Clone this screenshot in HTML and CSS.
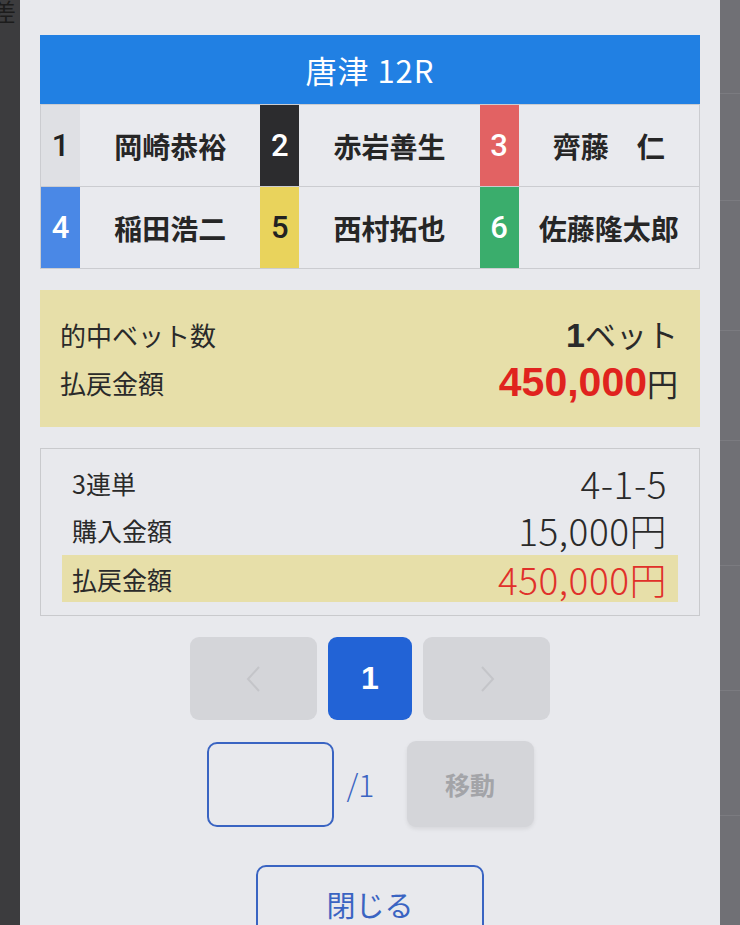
FILE: index.html
```html
<!DOCTYPE html>
<html lang="ja">
<head>
<meta charset="utf-8">
<title>唐津 12R</title>
<link rel="stylesheet" href="styles.css">
</head>
<body>
<div class="screen">
  <div class="side side-left">
    <span class="behind-text">差し</span>
  </div>
  <main class="modal">
    <div class="race-title">唐津 12R</div>
    <div class="players">
      <div class="player"><span class="num n1">1</span><span class="name">岡崎恭裕</span></div>
      <div class="player"><span class="num n2">2</span><span class="name">赤岩善生</span></div>
      <div class="player"><span class="num n3">3</span><span class="name">齊藤　仁</span></div>
      <div class="player"><span class="num n4">4</span><span class="name">稲田浩二</span></div>
      <div class="player"><span class="num n5">5</span><span class="name">西村拓也</span></div>
      <div class="player"><span class="num n6">6</span><span class="name">佐藤隆太郎</span></div>
    </div>

    <section class="summary">
      <div class="sum-row">
        <span class="sum-label">的中ベット数</span>
        <span class="sum-value"><b class="bet-num">1</b>ベット</span>
      </div>
      <div class="sum-row">
        <span class="sum-label">払戻金額</span>
        <span class="sum-value"><b class="pay-num">450,000</b>円</span>
      </div>
    </section>

    <section class="detail">
      <div class="det-row">
        <span class="det-label">3連単</span>
        <span class="det-value">4-1-5</span>
      </div>
      <div class="det-row">
        <span class="det-label">購入金額</span>
        <span class="det-value">15,000円</span>
      </div>
      <div class="det-row det-hit">
        <span class="det-label">払戻金額</span>
        <span class="det-value red">450,000円</span>
      </div>
    </section>

    <nav class="pager">
      <button class="pg pg-arrow" aria-label="前へ">
        <svg width="22" height="30" viewBox="0 0 22 30"><path d="M16 3 L5 15 L16 27" fill="none" stroke="#c4c5c9" stroke-width="2"/></svg>
      </button>
      <button class="pg pg-current">1</button>
      <button class="pg pg-arrow" aria-label="次へ">
        <svg width="22" height="30" viewBox="0 0 22 30"><path d="M6 3 L17 15 L6 27" fill="none" stroke="#c4c5c9" stroke-width="2"/></svg>
      </button>
    </nav>

    <div class="jump">
      <input class="jump-input" type="text" aria-label="ページ">
      <span class="jump-total">/1</span>
      <button class="jump-btn">移動</button>
    </div>

    <div class="close-wrap">
      <button class="close-btn">閉じる</button>
    </div>
  </main>
  <div class="side side-right"></div>
</div>
</body>
</html>
```

FILE: styles.css
```css
* { box-sizing: border-box; }

html, body {
  margin: 0;
  padding: 0;
  height: 925px;
  overflow: hidden;
  font-family: "Noto Sans CJK JP", "Noto Sans", "Liberation Sans", sans-serif;
  color: #222;
}

.screen {
  display: flex;
  width: 740px;
  height: 925px;
}

.side {
  width: 20px;
  flex: none;
  height: 925px;
}

.side-left {
  background: #3c3c3e;
  overflow: hidden;
}

.behind-text {
  display: block;
  margin-left: -8px;
  margin-top: -4px;
  font-size: 24px;
  line-height: 30px;
  color: #1c1c1c;
  white-space: nowrap;
}

.side-right {
  background-color: #707075;
  background-image:
    linear-gradient(#7b7b80, #7b7b80),
    linear-gradient(#7b7b80, #7b7b80),
    linear-gradient(#7b7b80, #7b7b80),
    linear-gradient(#7b7b80, #7b7b80),
    linear-gradient(#7b7b80, #7b7b80),
    linear-gradient(#7b7b80, #7b7b80),
    linear-gradient(#7b7b80, #7b7b80);
  background-size: 100% 1px;
  background-repeat: no-repeat;
  background-position: 0 93px, 0 200px, 0 330px, 0 440px, 0 565px, 0 690px, 0 815px;
}

.modal {
  width: 700px;
  flex: none;
  height: 925px;
  background: #e8e9ed;
  padding: 35px 20px 0;
  overflow: hidden;
}

.race-title {
  height: 69px;
  background: #2180e3;
  color: #fff;
  font-size: 31px;
  display: flex;
  align-items: center;
  justify-content: center;
  letter-spacing: 1px;
}

.players {
  display: grid;
  grid-template-columns: repeat(3, 1fr);
  grid-auto-rows: 82px;
  border: 1px solid #cbccd0;
  border-top: none;
  background: #e9eaee;
}

.player {
  display: flex;
  border-top: 1px solid #cbccd0;
}

.num {
  width: 39px;
  flex: none;
  display: flex;
  align-items: center;
  justify-content: center;
  font-size: 31px;
  font-family: Roboto, "Liberation Sans", sans-serif;
  font-weight: 500;
}

.n1 { background: #dfe0e4; color: #222; }
.n2 { background: #2c2c2e; color: #fff; }
.n3 { background: #e26263; color: #fff; }
.n4 { background: #4a88e6; color: #fff; }
.n5 { background: #e9d35c; color: #222; }
.n6 { background: #3aad6c; color: #fff; }

.name {
  flex: 1;
  display: flex;
  align-items: center;
  justify-content: center;
  font-size: 28px;
  font-weight: 700;
  color: #262626;
  white-space: nowrap;
}

.summary {
  margin-top: 21px;
  height: 137px;
  background: #e7dfa9;
  padding: 20px 22px 0 20px;
}

.sum-row {
  display: flex;
  justify-content: space-between;
  align-items: center;
  height: 48px;
}

.sum-label {
  font-size: 26px;
  color: #2a2a2a;
}

.sum-value {
  font-size: 31px;
  line-height: 44px;
  color: #2a2a2a;
}

.bet-num {
  font-size: 34px;
  font-weight: 700;
  font-family: "Liberation Sans", sans-serif;
}

.pay-num {
  font-size: 41px;
  font-weight: 700;
  color: #e0231e;
  font-family: "Liberation Sans", sans-serif;
}

.detail {
  margin-top: 21px;
  height: 168px;
  border: 1px solid #c9cacd;
  padding: 10px 21px 0;
}

.det-row {
  display: flex;
  justify-content: space-between;
  align-items: center;
  height: 47px;
  padding: 0 11px 0 10px;
}

.det-hit {
  margin-top: 2px;
  background: #e7dfa9;
}

.det-label {
  font-size: 25px;
  color: #2a2a2a;
}

.det-value {
  font-size: 37px;
  line-height: 42px;
  font-weight: 300;
  letter-spacing: 0.5px;
  color: #2a2a2a;
}

.det-value.red {
  color: #e0302a;
}

.pager {
  margin-top: 21px;
  display: flex;
  justify-content: center;
  gap: 11px;
}

.pg {
  height: 83px;
  border: none;
  border-radius: 9px;
  display: flex;
  align-items: center;
  justify-content: center;
  padding: 0;
  font-family: inherit;
}

.pg-arrow {
  width: 127px;
  background: #d4d5d9;
}

.pg-current {
  width: 84px;
  background: #2263d6;
  color: #fff;
  font-size: 32px;
  font-weight: 700;
  font-family: "Liberation Sans", sans-serif;
}

.jump {
  margin-top: 21px;
  display: flex;
  justify-content: center;
  align-items: center;
}

.jump-input {
  width: 127px;
  height: 85px;
  border: 2px solid #3a64c2;
  border-radius: 10px;
  background: transparent;
  font-size: 24px;
}

.jump-total {
  width: 73px;
  padding-left: 13px;
  font-size: 30px;
  font-weight: 300;
  color: #3a64c2;
}

.jump-btn {
  width: 127px;
  height: 86px;
  border: none;
  border-radius: 9px;
  background: #d4d5d9;
  color: #a3a4a8;
  font-size: 25px;
  font-weight: 700;
  font-family: inherit;
  box-shadow: 0 2px 4px rgba(0, 0, 0, 0.08);
}

.close-wrap {
  margin-top: 38px;
  display: flex;
  justify-content: center;
}

.close-btn {
  width: 228px;
  height: 82px;
  border: 2px solid #3a64c2;
  border-radius: 10px;
  background: transparent;
  color: #3a64c2;
  font-size: 29px;
  font-family: inherit;
  display: flex;
  justify-content: center;
  align-items: flex-start;
  padding: 16px 0 0;
}
```
